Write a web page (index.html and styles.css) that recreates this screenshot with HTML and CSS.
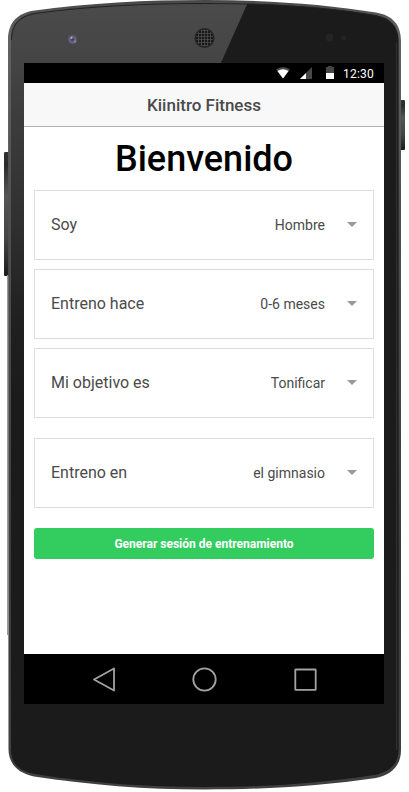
FILE: index.html
```html
<!DOCTYPE html>
<html lang="es">
<head>
<meta charset="utf-8">
<title>Kiinitro Fitness</title>
<link rel="stylesheet" href="styles.css">
</head>
<body>
<div class="phone">
  <svg class="shell" width="409" height="792" viewBox="0 0 409 792" aria-hidden="true">
    <defs>
      <linearGradient id="face" x1="0" y1="0" x2="0" y2="1"><stop offset="0" stop-color="#4b4b4b"/><stop offset=".12" stop-color="#464646"/><stop offset=".3" stop-color="#3c3c3c"/><stop offset=".55" stop-color="#303030"/><stop offset=".8" stop-color="#202020"/><stop offset="1" stop-color="#1b1b1b"/></linearGradient>
      <linearGradient id="edge" x1="0" y1="0" x2="0" y2="1"><stop offset="0" stop-color="#484848"/><stop offset=".04" stop-color="#626262"/><stop offset=".3" stop-color="#4e4e4e"/><stop offset=".7" stop-color="#3c3c3c"/><stop offset="1" stop-color="#404040"/></linearGradient>
      <linearGradient id="key" x1="0" y1="0" x2="0" y2="1"><stop offset="0" stop-color="#333"/><stop offset=".1" stop-color="#2a2a2a"/><stop offset=".35" stop-color="#555"/><stop offset=".7" stop-color="#444"/><stop offset="1" stop-color="#1b1b1b"/></linearGradient>
      <radialGradient id="lens"><stop offset="0" stop-color="#3a3768"/><stop offset=".6" stop-color="#6a6784"/><stop offset="1" stop-color="#48474d"/></radialGradient>
      <pattern id="mesh" width="3" height="3" patternUnits="userSpaceOnUse"><rect width="3" height="3" fill="#191919"/><path d="M0 .5H3M.5 0V3" stroke="#4c4c4c" stroke-width=".8"/></pattern>
      <clipPath id="glass"><path d="M11 40C11 24 19 16 35 13C90 5.500 145 3 205 3S325 6 375 15C391 18 398.500 27 398.500 41V750C398.500 764 390 772 374 775C320 783.500 265 787 205 787S90 783 35 774C19 771 11 764 11 749Z"/></clipPath>
    </defs>
    <rect x="4" y="152" width="5" height="124" rx="1" fill="url(#key)"/>
    <rect x="400" y="100" width="5" height="50" rx="1" fill="url(#key)"/>
    <path d="M7.500 275V635" stroke="#999"/>
    <path d="M8 40C8 22 18 13.500 33 10.800C90 3 145 0 205 0S325 4 376 12.500C393 15.500 401 25 401 41V750C401 766 391 775 376 778C320 786 265 789.500 205 789.500S90 785 34 776.500C18 773 8.500 764 8.500 749Z" fill="url(#edge)"/>
    <g clip-path="url(#glass)">
      <rect width="409" height="792" fill="#1b1b1b"/>
      <path d="M0 0H249L220 65V400H0Z" fill="url(#face)"/>
      <path d="M11.500 40C11.500 24 19.500 16.500 35 13.500C90 6 145 3.500 205 3.500S325 6.500 375 15.500C391 18.500 398 27 398 41V750" fill="none" stroke="#222"/>
      <path d="M396.500 42V750" stroke="#303030"/>
    </g>
    <circle cx="72.500" cy="39.500" r="5" fill="url(#lens)"/><circle cx="71.500" cy="37.800" r="1.100" fill="#aaa9dc"/><circle cx="75" cy="41.500" r="1.300" fill="#858391"/>
    <circle cx="204.500" cy="38" r="10" fill="#242424"/><circle cx="204.500" cy="38" r="8.500" fill="url(#mesh)"/>
    <circle cx="329.500" cy="37.500" r="4" fill="#242424"/><circle cx="343.500" cy="38" r="2.500" fill="#242424"/>
  </svg>
  <div class="screen">
    <div class="status">
      <svg width="60" height="20" viewBox="0 0 60 20" aria-hidden="true">
        <path d="M0 6.500Q7 1.500 14 6.500L7 15.500Z" fill="#4a4a4a"/><path d="M1.500 8Q7 4.500 12.500 8L7 15.500Z" fill="#fff"/>
        <path d="M24 16L36 4V16Z" fill="#484848"/><path d="M24 16L30 10V16Z" fill="#fff"/>
        <path d="M50 4H52V3H56V4H58V16H50Z" fill="#454545"/><path d="M50 10H58V16H50Z" fill="#fff"/>
      </svg>
      <time>12:30</time>
    </div>
    <header class="bar">Kiinitro Fitness</header>
    <main class="content">
      <h1>Bienvenido</h1>
      <div class="card"><span class="label">Soy</span><span class="value">Hombre</span><i class="arrow"></i></div>
      <div class="card"><span class="label">Entreno hace</span><span class="value">0-6 meses</span><i class="arrow"></i></div>
      <div class="card"><span class="label">Mi objetivo es</span><span class="value">Tonificar</span><i class="arrow"></i></div>
      <div class="card place"><span class="label">Entreno en</span><span class="value">el gimnasio</span><i class="arrow"></i></div>
      <button class="generate">Generar sesión de entrenamiento</button>
    </main>
    <nav class="nav">
      <svg width="360" height="50" viewBox="0 0 360 50" fill="none" stroke="#a2a2a2" stroke-width="1.800" stroke-linejoin="round" aria-hidden="true">
        <path d="M90 14.500V36.500L70 25.500Z"/><circle cx="180.500" cy="25.500" r="11.200"/><rect x="271.300" y="15.500" width="20.400" height="20.400" rx=".5"/>
      </svg>
    </nav>
  </div>
</div>
</body>
</html>
```
FILE: styles.css
```css
* { box-sizing: border-box; }
body { margin: 0; background: #fff; font-family: Roboto, sans-serif; overflow: hidden; }
.phone { position: relative; width: 409px; height: 792px; padding: 63px 25px 88px 24px; }
.shell { position: absolute; inset: 0; }
.screen { position: relative; width: 360px; height: 641px; background: #fff; display: flex; flex-direction: column; }
.status { height: 20px; background: #000; color: #fff; display: flex; align-items: center; justify-content: flex-end; padding-right: 9px; gap: 7px; font-size: 12px; letter-spacing: .2px; }
.status svg { display: block; }
.status time { width: 32px; line-height: 20px; padding-top: 1px; }
.bar { height: 44px; background: #f8f8f8; border-bottom: 1px solid #b2b2b2; color: #4a4a4a; text-align: center; font-size: 17px; font-weight: 500; line-height: 44px; }
.content { flex: 1; padding: 10px; display: flex; flex-direction: column; }
h1 { margin: 0 0 10px; height: 43px; line-height: 45px; font-size: 36px; font-weight: 500; text-align: center; color: #000; }
.card { height: 70px; margin-bottom: 9px; border: 1px solid #ddd; padding: 0 16px; display: flex; align-items: center; color: #4a4a4a; font-size: 16px; }
.label { flex: 1; line-height: 22px; }
.value { font-size: 14px; line-height: 20px; }
.arrow { margin: 0 0 1px 22px; border: 5px solid transparent; border-top-color: #999; border-bottom: 0; }
.place { margin-top: 11px; margin-bottom: 20px; }
.generate { height: 31px; border: 0; border-radius: 3px; background: #33cd5f; color: #fff; font: 700 12px/31px Roboto, sans-serif; padding: 1px 0 0; }
.nav { height: 50px; background: #000; }
.nav svg { display: block; }
```
